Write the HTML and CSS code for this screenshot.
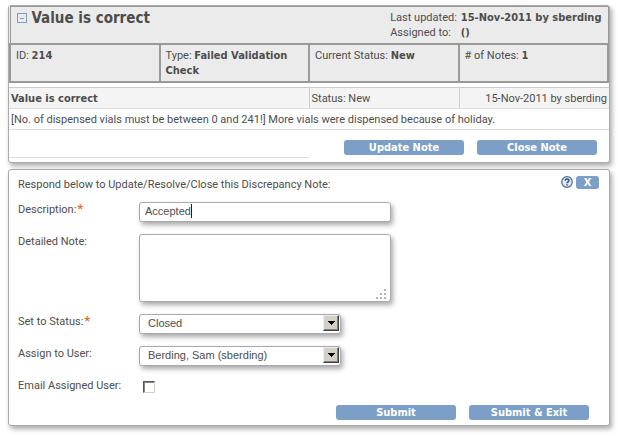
FILE: index.html
```html
<!DOCTYPE html>
<html lang="en">
<head>
<meta charset="utf-8">
<title>Discrepancy Note</title>
<link rel="stylesheet" href="styles.css">
</head>
<body>
<main>
  <section class="card thread">
    <table class="summary">
      <tr>
        <td colspan="2" class="heading">
          <div class="title">
            <button type="button" class="toggle" aria-label="Collapse"><svg width="10" height="10" viewBox="0 0 10 10" shape-rendering="crispEdges"><rect x=".5" y=".5" width="9" height="9" fill="none" stroke="#7b9fc4"/><path d="M3 5.500h4" stroke="#7b9fc4"/></svg></button>
            <h1>Value is correct</h1>
          </div>
        </td>
        <td colspan="2" class="heading">
          <dl class="meta">
            <dt>Last updated:</dt><dd>15-Nov-2011 by sberding</dd>
            <dt>Assigned to:</dt><dd>()</dd>
          </dl>
        </td>
      </tr>
      <tr class="facts">
        <td>ID: <b>214</b></td>
        <td>Type: <b>Failed Validation Check</b></td>
        <td>Current Status: <b>New</b></td>
        <td># of Notes: <b>1</b></td>
      </tr>
    </table>
    <table class="notes">
      <tr class="note-head">
        <th colspan="2">Value is correct</th>
        <td>Status: New</td>
        <td class="date">15-Nov-2011 by sberding</td>
      </tr>
      <tr><td colspan="4" class="note">[No. of dispensed vials must be between 0 and 241!] More vials were dispensed because of holiday.</td></tr>
      <tr class="actions">
        <td colspan="2" class="blank"></td>
        <td colspan="2"><div class="buttons"><button type="button" class="btn">Update Note</button><button type="button" class="btn">Close Note</button></div></td>
      </tr>
    </table>
  </section>

  <form class="card response">
    <header>
      <p>Respond below to Update/Resolve/Close this Discrepancy Note:</p>
      <button type="button" class="help" aria-label="Help"><svg width="12" height="12" viewBox="0 0 12 12"><circle cx="6" cy="6" r="5.300" fill="#dce8f5" stroke="#4f6d96" stroke-width="1.200"/><path d="M4.200 4.700C4.200 2.500 7.900 2.500 7.900 4.600C7.900 5.900 6.100 5.900 6.100 7.200M6.100 8.300v1.300" fill="none" stroke="#2f4b78" stroke-width="1.400"/></svg></button>
      <button type="button" class="close">X</button>
    </header>
    <div class="fields">
      <label for="description">Description:<span class="req">*</span></label>
      <div class="entry"><input type="text" id="description" class="wide" value="Accepted"><span class="caret"></span></div>
      <label for="detail">Detailed Note:</label>
      <div class="area">
        <textarea id="detail" class="wide"></textarea>
        <svg class="grip" width="10" height="10" viewBox="0 0 10 10" fill="#b5b5b5" shape-rendering="crispEdges"><path d="M8 0h2v2h-2zM4 4h2v2h-2zM8 4h2v2h-2zM0 8h2v2h-2zM4 8h2v2h-2zM8 8h2v2h-2z"/></svg>
      </div>
      <label for="status">Set to Status:<span class="req">*</span></label>
      <div class="select"><select id="status"><option>Closed</option></select><span class="arrow"><svg width="7" height="4" viewBox="0 0 7 4" shape-rendering="crispEdges"><path d="M0 0h7v1h-1v1h-1v1h-1v1h-1v-1h-1v-1h-1v-1h-1z"/></svg></span></div>
      <label for="user">Assign to User:</label>
      <div class="select"><select id="user"><option>Berding, Sam (sberding)</option></select><span class="arrow"><svg width="7" height="4" viewBox="0 0 7 4" shape-rendering="crispEdges"><path d="M0 0h7v1h-1v1h-1v1h-1v1h-1v-1h-1v-1h-1v-1h-1z"/></svg></span></div>
      <label for="email">Email Assigned User:</label>
      <input type="checkbox" id="email">
    </div>
    <div class="buttons submit"><button type="button" class="btn">Submit</button><button type="button" class="btn">Submit &amp; Exit</button></div>
  </form>
</main>
</body>
</html>
```
FILE: styles.css
```css
* { box-sizing: border-box; }
body {
  margin: 0;
  padding: 5px 8px 8px;
  background: #fff;
  color: #4d4d4d;
  font: 11px/15px Tahoma, Roboto, sans-serif;
}
h1, p, dl, dd { margin: 0; }
button { font: inherit; border: 0; padding: 0; cursor: pointer; }
b, dd, th, h1, .btn, .close { font-family: Tahoma, "DejaVu Sans Condensed", sans-serif; font-weight: bold; }
b { line-height: 12px; }

.card {
  margin-bottom: 6px;
  background: #fff;
  border: 1px solid #aaa;
  border-radius: 3px;
  box-shadow: 2px 3px 5px #aaa;
}
main { display: flex; flex-direction: column; }

table { width: 100%; table-layout: fixed; border-collapse: collapse; }
td, th { text-align: left; vertical-align: top; }

.summary { background: #ebebeb; border: 1px solid #999; }
.heading { height: 37px; padding: 3px 6px 2px 6px; border-bottom: 2px solid #999; }
.title { display: flex; align-items: flex-start; gap: 5px; }
.toggle { display: flex; margin-top: 3px; background: none; }
h1 { font-size: 15px; line-height: 16px; }
.meta {
  display: grid;
  grid-template-columns: max-content max-content;
  column-gap: 4px;
  justify-content: end;
}
.facts td { height: 36px; padding: 3px 5px; border: 2px solid #999; }

.notes { margin-top: 4px; border-top: 1px solid #ccc; }
.note-head { background: #f4f4f4; }
.note-head th, .note-head td, .note { height: 21px; padding: 3px 2px 2px; border-bottom: 1px solid #ddd; }
.note-head td { border-left: 1px solid #ccc; }
.note-head .date { text-align: right; }
.actions td { height: 28px; padding: 10px 12px 0 0; }
.actions .blank { border-bottom: 1px solid #ddd; }
.thread { padding-bottom: 4px; }

.buttons { display: flex; justify-content: flex-end; gap: 13px; }
.btn {
  width: 120px;
  height: 15px;
  border-radius: 3px;
  background: #7b9fc6;
  color: #fff;
  line-height: 15px;
}

.response { padding: 6px 10px 5px 9px; }
.response header { display: flex; align-items: flex-start; gap: 3px; }
header p { flex: 1; line-height: 17px; }
.help { display: flex; background: none; }
.close {
  width: 23px;
  height: 13px;
  border-radius: 3px;
  background: #7b9fc6;
  color: #fff;
  line-height: 13px;
}
.fields {
  display: grid;
  grid-template-columns: 121px 1fr;
  row-gap: 12px;
  margin-top: 9px;
  align-items: start;
  justify-items: start;
}
.req { color: #e07030; font-size: 13px; line-height: 12px; font-weight: bold; margin-left: 1px; }
input[type="text"], textarea, select {
  display: block;
  width: 100%;
  height: 20px;
  border: 1px solid #aaa;
  border-radius: 3px;
  background: #fff;
  box-shadow: 2px 3px 5px #aaa;
  color: #4d4d4d;
  font: 11px/16px "Liberation Sans", Arial, sans-serif;
  padding: 0 5px;
  outline: 0;
  margin: 0;
}
.fields .wide { width: 252px; }
.entry, .area { position: relative; }
.entry input { padding: 0 5px 2px; }
.caret { position: absolute; left: 52px; top: 2px; width: 1px; height: 14px; background: #222; }
.area textarea { height: 68px; resize: none; }
.grip { position: absolute; right: 5px; bottom: 3px; }
.select { position: relative; width: 202px; }
.select select { appearance: none; padding: 0 8px 1px; }
.arrow {
  position: absolute;
  top: 1px;
  right: 2px;
  display: flex;
  align-items: center;
  justify-content: center;
  width: 16px;
  height: 16px;
  background: #d4d0c8;
  border: 1px solid;
  border-color: #eee #404040 #404040 #eee;
  box-shadow: inset -1px -1px #808080;
  pointer-events: none;
}
input[type="checkbox"] {
  appearance: none;
  width: 12px;
  height: 12px;
  margin: 3px 4px;
  background: #fff;
  border: 1px solid;
  border-color: #555 #d4d0c8 #d4d0c8 #555;
  box-shadow: inset 1px 1px #888;
}
.submit { margin: 9px 10px 0 0; }
```
